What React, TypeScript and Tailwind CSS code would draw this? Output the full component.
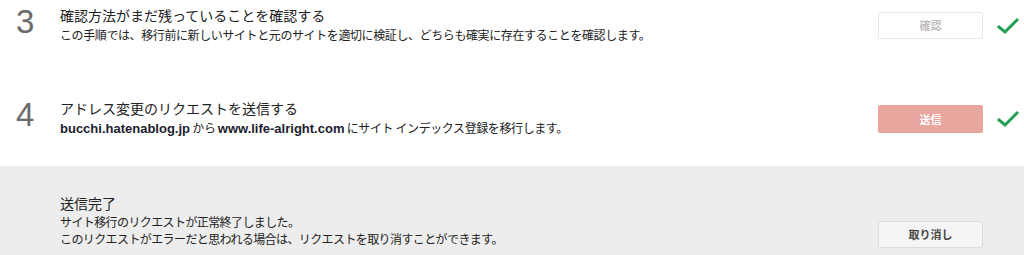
import React from 'react';

const jp = '"Noto Sans CJK JP", "Noto Sans", sans-serif';

const Check = () => (
  <svg width="22" height="18" viewBox="0 0 22 18" className="block">
    <polyline points="2,10 8,15 20,3" fill="none" stroke="#22a052" strokeWidth="3" strokeLinecap="square" />
  </svg>
);

type StepProps = {
  num: string;
  title: string;
  children: React.ReactNode;
  button: React.ReactNode;
};

const Step = ({ num, title, children, button }: StepProps) => (
  <div className="flex h-[93px] items-start">
    <div className="w-[60px] pl-[16px] pt-[5px] text-[33px] leading-[33px] text-[#6b6b6b] font-['Liberation_Sans',Arial,sans-serif]">
      {num}
    </div>
    <div className="flex-1 pt-[5px]" style={{ fontFamily: jp }}>
      <div className="text-[14px] leading-[20px] text-[#222]">{title}</div>
      <div className="mt-[2px] text-[12px] leading-[16px] tracking-[-0.4px] text-[#222]">{children}</div>
    </div>
    <div className="mt-[12px] flex items-center">
      {button}
      <div className="ml-[14px] mr-[5px] w-[22px]">
        <Check />
      </div>
    </div>
  </div>
);

export default function App() {
  return (
    <div className="w-[1024px] h-[255px] overflow-hidden bg-white" style={{ fontFamily: jp }}>
      <Step
        num="3"
        title="確認方法がまだ残っていることを確認する"
        button={
          <button className="w-[105px] h-[27px] rounded-[2px] border border-[#e6e6e6] bg-white text-[11px] font-bold text-[#bdbdbd]">
            確認
          </button>
        }
      >
        この手順では、移行前に新しいサイトと元のサイトを適切に検証し、どちらも確実に存在することを確認します。
      </Step>
      <Step
        num="4"
        title="アドレス変更のリクエストを送信する"
        button={
          <button className="w-[105px] h-[28px] rounded-[2px] bg-[#e8a69e] text-[11px] font-bold text-white">
            送信
          </button>
        }
      >
        <span className="font-bold text-[13px] tracking-normal text-[#1c1c2e] font-['Liberation_Sans',Arial,sans-serif]">bucchi.hatenablog.jp</span>
        <span> から </span>
        <span className="font-bold text-[13px] tracking-normal text-[#1c1c2e] font-['Liberation_Sans',Arial,sans-serif]">www.life-alright.com</span>
        <span> にサイト インデックス登録を移行します。</span>
      </Step>
      <div className="-mt-[20px] flex h-[89px] bg-[#ededed]">
        <div className="w-[60px]" />
        <div className="flex-1 pt-[27px]">
          <div className="text-[14px] leading-[20px] text-[#222]">送信完了</div>
          <div className="text-[12px] leading-[17px] tracking-[-0.6px] text-[#222]">
            <div>サイト移行のリクエストが正常終了しました。</div>
            <div>このリクエストがエラーだと思われる場合は、リクエストを取り消すことができます。</div>
          </div>
        </div>
        <div className="mt-[54px] mr-[41px]">
          <button className="w-[105px] h-[27px] rounded-[2px] border border-[#dcdcdc] bg-[#f5f5f5] text-[11px] font-bold text-[#444]">
            取り消し
          </button>
        </div>
      </div>
    </div>
  );
}
